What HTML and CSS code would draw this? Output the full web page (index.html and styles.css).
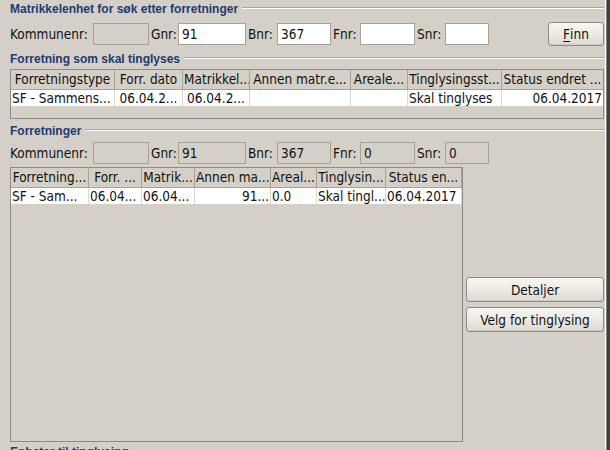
FILE: index.html
```html
<!DOCTYPE html>
<html lang="no">
<head>
<meta charset="utf-8">
<title>Forretninger</title>
<link rel="stylesheet" href="styles.css">
</head>
<body>
<div class="window">
  <div class="pane">
    <div class="group-title"><span class="gt-text">Matrikkelenhet for søk etter forretninger</span><span class="gt-line"></span></div>
    <div class="field-row search">
      <span class="lbl w-k">Kommunenr:</span><span class="field f-k off"></span>
      <span class="lbl w-g">Gnr:</span><span class="field f-g">91</span>
      <span class="lbl w-b">Bnr:</span><span class="field f-b">367</span>
      <span class="lbl w-f">Fnr:</span><span class="field f-f"></span>
      <span class="lbl w-s">Snr:</span><span class="field f-s"></span>
      <span class="spacer"></span>
      <span class="btn btn-finn"><u>F</u>inn</span>
    </div>

    <div class="group-title gt2"><span class="gt-text">Forretning som skal tinglyses</span><span class="gt-line"></span></div>
    <div class="table t1">
      <div class="thead">
        <div class="th">Forretningstype</div>
        <div class="th">Forr. dato</div>
        <div class="th">Matrikkel...</div>
        <div class="th">Annen matr.e...</div>
        <div class="th">Areale...</div>
        <div class="th">Tinglysingsst...</div>
        <div class="th last">Status endret ...</div>
      </div>
      <div class="trow">
        <div class="td">SF - Sammens...</div>
        <div class="td c">06.04.2...</div>
        <div class="td c">06.04.2...</div>
        <div class="td"></div>
        <div class="td"></div>
        <div class="td">Skal tinglyses</div>
        <div class="td r last">06.04.2017</div>
      </div>
    </div>

    <div class="group-title gt3"><span class="gt-text">Forretninger</span><span class="gt-line"></span></div>
    <div class="field-row result">
      <span class="lbl w-k">Kommunenr:</span><span class="field f-k off"></span>
      <span class="lbl w-g">Gnr:</span><span class="field f-g off">91</span>
      <span class="lbl w-b">Bnr:</span><span class="field f-b off">367</span>
      <span class="lbl w-f">Fnr:</span><span class="field f-f off">0</span>
      <span class="lbl w-s">Snr:</span><span class="field f-s off">0</span>
    </div>
    <div class="list-area">
      <div class="table t2">
        <div class="thead">
          <div class="th">Forretning...</div>
          <div class="th">Forr. ...</div>
          <div class="th">Matrik...</div>
          <div class="th">Annen ma...</div>
          <div class="th">Areal...</div>
          <div class="th">Tinglysin...</div>
          <div class="th">Status en...</div>
        </div>
        <div class="trow">
          <div class="td">SF - Sam...</div>
          <div class="td">06.04...</div>
          <div class="td">06.04...</div>
          <div class="td r">91...</div>
          <div class="td">0.0</div>
          <div class="td">Skal tingl...</div>
          <div class="td">06.04.2017</div>
        </div>
      </div>
      <div class="side">
        <span class="btn btn-wide">Detaljer</span>
        <span class="btn btn-wide">Velg for tinglysing</span>
      </div>
    </div>
    <div class="group-title gt4"><span class="gt-text">Enheter til tinglysing</span><span class="gt-line"></span></div>
  </div>
  <div class="edge"></div>
</div>
</body>
</html>
```
FILE: styles.css
```css
html, body {
  margin: 0;
  padding: 0;
}
body {
  width: 610px;
  height: 450px;
  overflow: hidden;
  background: #d4d0c8;
  font-family: "DejaVu Sans Condensed", "DejaVu Sans", sans-serif;
  font-stretch: condensed;
  font-size: 13.5px;
  color: #111;
}
.window {
  display: flex;
  height: 450px;
}
.pane {
  width: 594px;
  padding: 1px 0 0 10px;
  display: flex;
  flex-direction: column;
  flex: none;
}
.edge {
  width: 6px;
  flex: none;
  background: linear-gradient(to right, #d4d0c8 0 1px, #ffffff 1px 2px, #808080 2px 3px, #404040 3px);
}

/* titled separators */
.group-title {
  display: flex;
  height: 16px;
  flex: none;
}
.gt-text {
  font-family: "Liberation Sans", Arial, sans-serif;
  font-stretch: normal;
  font-weight: bold;
  font-size: 12px;
  line-height: 16px;
  color: #213a6f;
  white-space: nowrap;
}
.gt-line {
  flex: 1;
  height: 0;
  margin: 6px 0 0 4px;
  border-top: 1px solid #a8a59e;
  border-bottom: 1px solid #ffffff;
}
.gt2 { margin-top: 5px; }
.gt3 { margin-top: 4px; }
.gt4 { margin-top: 2px; }

/* field rows */
.field-row {
  display: flex;
  align-items: center;
  flex: none;
}
.search { height: 24px; margin-top: 5px; }
.result { height: 22px; margin-top: 3px; }
.lbl {
  box-sizing: border-box;
  padding-left: 2px;
  white-space: nowrap;
  flex: none;
}
.w-k { width: 83px; padding-left: 0; }
.w-g { width: 29px; }
.w-b { width: 31px; }
.w-f { width: 29px; }
.w-s { width: 30px; }
.field {
  box-sizing: border-box;
  height: 22px;
  border: 1px solid #a5a29b;
  background: #ffffff;
  padding: 0 3px;
  line-height: 20px;
  white-space: nowrap;
  overflow: hidden;
  flex: none;
}
.field.off { background: #d4d0c8; }
.f-k { width: 56px; }
.f-g { width: 68px; }
.f-b { width: 54px; }
.f-f { width: 55px; }
.f-s { width: 44px; }
.spacer { flex: 1; }

/* buttons */
.btn {
  box-sizing: border-box;
  display: flex;
  align-items: center;
  justify-content: center;
  border: 1px solid #8e8b84;
  border-radius: 3px;
  background: linear-gradient(#f7f6f3, #e9e7e1 60%, #dcd9d1);
  box-shadow: inset 0 -1px 0 #cfccc4;
  color: #111;
  white-space: nowrap;
  flex: none;
}
.btn-finn {
  width: 56px;
  height: 24px;
}
.btn-finn u { text-underline-offset: 2px; }
.btn-wide {
  width: 138px;
  height: 25px;
}

/* tables */
.table {
  box-sizing: border-box;
  border: 1px solid #8d8b85;
  background: #d4d0c8;
  overflow: hidden;
  flex: none;
}
.t1 {
  height: 50px;
  margin-top: 2px;
}
.thead, .trow {
  display: grid;
}
.t1 .thead, .t1 .trow {
  grid-template-columns: 104px 68px 67px 101px 57px 94px 1fr;
}
.t2 .thead, .t2 .trow {
  grid-template-columns: 78px 53px 53px 76px 46px 69px 76px;
}
.th {
  box-sizing: border-box;
  height: 20px;
  line-height: 19px;
  border-right: 1px solid #a6a39d;
  border-bottom: 1px solid #a6a39d;
  text-align: center;
  white-space: nowrap;
  overflow: hidden;
  padding: 0 1px;
  color: #111;
}
.th.last { border-right: none; }
.td {
  box-sizing: border-box;
  height: 16px;
  line-height: 16px;
  background: #ffffff;
  border-right: 1px solid #dad8d3;
  white-space: nowrap;
  overflow: hidden;
  padding: 0 1px;
}
.td.c { text-align: center; }
.td.r { text-align: right; }
.td.last { border-right: none; }

.list-area {
  display: flex;
  height: 275px;
  margin-top: 3px;
  flex: none;
}
.t2 {
  width: 453px;
  height: 275px;
}
.side {
  flex: 1;
  display: flex;
  flex-direction: column;
  justify-content: center;
  gap: 5px;
  padding-left: 3px;
}
```
